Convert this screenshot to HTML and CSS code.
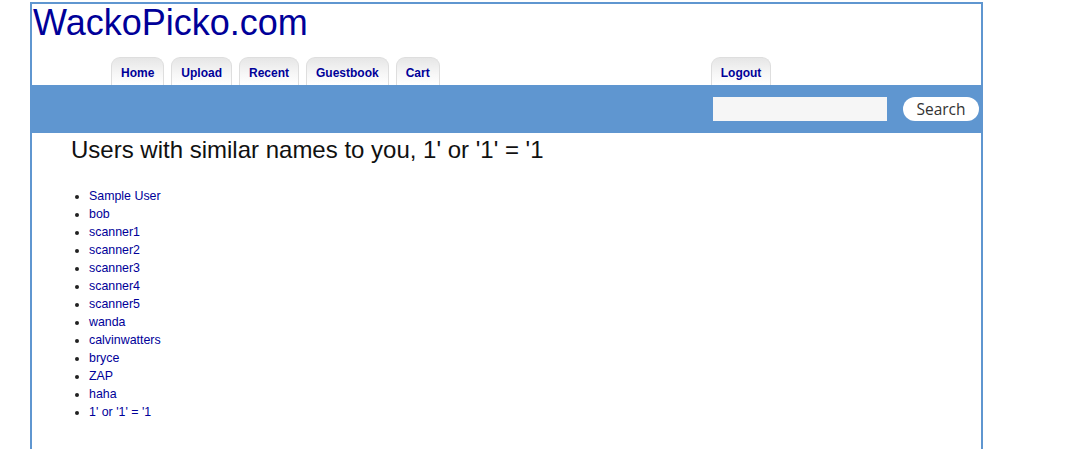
FILE: index.html
```html
<!DOCTYPE html>
<html>
<head>
<meta charset="utf-8">
<title>WackoPicko.com</title>
<link rel="stylesheet" href="styles.css">
</head>
<body>
<div class="container">
  <div class="header">
    <h1 class="logo"><a href="#">WackoPicko.com</a></h1>
    <div class="menu">
      <ul class="tabs">
        <li><a href="#">Home</a></li>
        <li><a href="#">Upload</a></li>
        <li><a href="#">Recent</a></li>
        <li><a href="#">Guestbook</a></li>
        <li><a href="#">Cart</a></li>
      </ul>
      <ul class="tabs tabs-right">
        <li><a href="#">Logout</a></li>
      </ul>
    </div>
  </div>
  <div class="searchbar">
    <form class="search">
      <input class="search-input" type="text" name="query">
      <button class="search-btn" type="button">Search</button>
    </form>
  </div>
  <div class="content">
    <h2 class="title">Users with similar names to you, 1' or '1' = '1</h2>
    <ul class="users">
      <li><a href="#">Sample User</a></li>
      <li><a href="#">bob</a></li>
      <li><a href="#">scanner1</a></li>
      <li><a href="#">scanner2</a></li>
      <li><a href="#">scanner3</a></li>
      <li><a href="#">scanner4</a></li>
      <li><a href="#">scanner5</a></li>
      <li><a href="#">wanda</a></li>
      <li><a href="#">calvinwatters</a></li>
      <li><a href="#">bryce</a></li>
      <li><a href="#">ZAP</a></li>
      <li><a href="#">haha</a></li>
      <li><a href="#">1' or '1' = '1</a></li>
    </ul>
  </div>
</div>
</body>
</html>
```

FILE: styles.css
```css
html, body {
  margin: 0;
  padding: 0;
  background: #fff;
  font-family: "Liberation Sans", Arial, sans-serif;
}

.container {
  margin: 2px 0 0 30px;
  width: 949px;
  min-height: 460px;
  border: 2px solid #5f96d0;
  border-bottom: none;
}

.header {
  display: flex;
  flex-direction: column;
}

.logo {
  margin: 0 0 0 1px;
  font-size: 36px;
  line-height: 38px;
  font-weight: normal;
}

.logo a {
  color: #000099;
  text-decoration: none;
}

.menu {
  display: flex;
  margin-top: 15px;
  padding-left: 79px;
}

.tabs {
  display: flex;
  gap: 7px;
  list-style: none;
  margin: 0;
  padding: 0;
}

.tabs-right {
  margin-left: 271px;
}

.tabs li {
  height: 24px;
  padding: 3px 9px 0;
  border: 1px solid #dedede;
  border-bottom: none;
  border-radius: 9px 9px 0 0;
  background: linear-gradient(to bottom, #e6e6e6 0%, #f7f7f7 60%, #ffffff 100%);
}

.tabs a {
  display: block;
  font-size: 12px;
  font-weight: bold;
  line-height: 24px;
  color: #000099;
  text-decoration: none;
}

.searchbar {
  height: 48px;
  background: #5f96d0;
  display: flex;
  justify-content: flex-end;
  align-items: flex-start;
}

.search {
  display: flex;
  gap: 16px;
  margin: 12px 2px 0 0;
}

.search-input {
  width: 174px;
  height: 24px;
  box-sizing: border-box;
  border: none;
  background: #f6f6f6;
  margin: 0;
  padding: 0 4px;
}

.search-btn {
  width: 76px;
  height: 24px;
  border: none;
  border-radius: 12px;
  background: #fff;
  color: #333;
  font-family: "Open Sans", "DejaVu Sans", sans-serif;
  font-size: 15.5px;
  line-height: 24px;
  padding: 0;
  margin: 0;
}

.content {
  padding: 3px 0 0 39px;
}

.title {
  margin: 0;
  font-size: 24px;
  font-weight: normal;
  color: #111;
}

.users {
  margin: 23px 0 0;
  padding-left: 18px;
  color: #222;
  font-size: 12.4px;
  line-height: 18px;
}

.users a {
  color: #000099;
  text-decoration: none;
}
```
